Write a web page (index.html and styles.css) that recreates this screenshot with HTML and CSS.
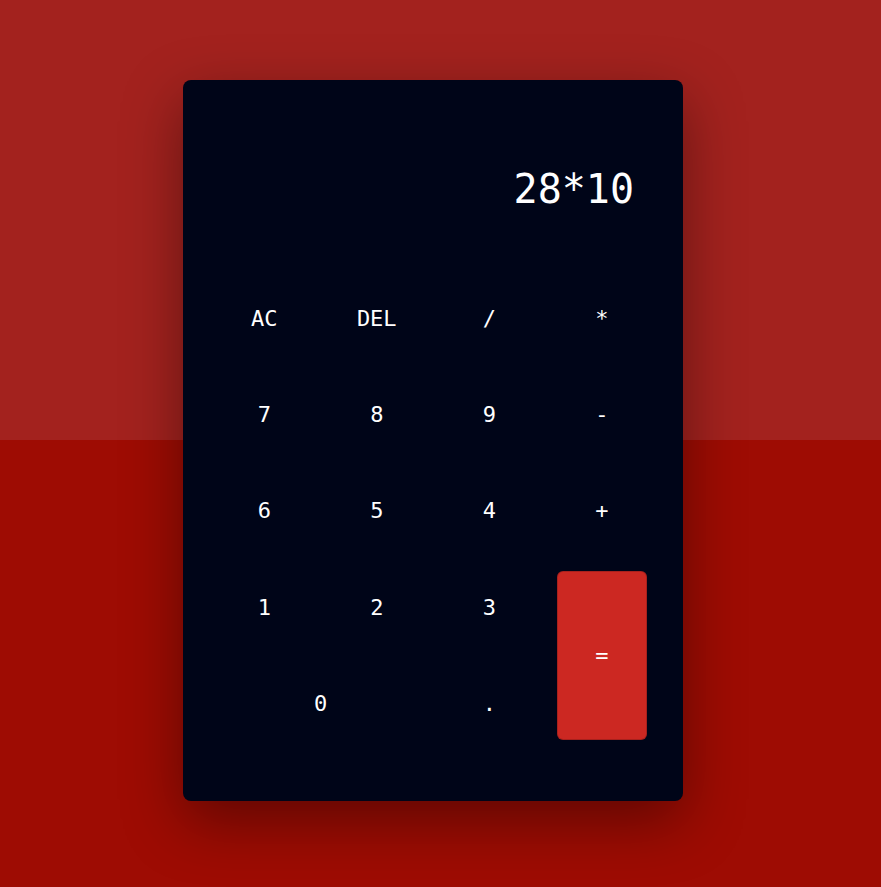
FILE: index.html
```html
<!DOCTYPE html>
<html lang="en">
<head>
<meta charset="utf-8">
<title>Calculator</title>
<link rel="stylesheet" href="styles.css">
</head>
<body>
<main class="page">
  <div class="calculator">
    <div class="display">28*10</div>
    <div class="keys">
      <button class="key">AC</button>
      <button class="key">DEL</button>
      <button class="key">/</button>
      <button class="key">*</button>
      <button class="key">7</button>
      <button class="key">8</button>
      <button class="key">9</button>
      <button class="key">-</button>
      <button class="key">6</button>
      <button class="key">5</button>
      <button class="key">4</button>
      <button class="key">+</button>
      <button class="key">1</button>
      <button class="key">2</button>
      <button class="key">3</button>
      <button class="key key-equals">=</button>
      <button class="key key-zero">0</button>
      <button class="key">.</button>
    </div>
  </div>
</main>
</body>
</html>
```
FILE: styles.css
```css
* { box-sizing: border-box; }
html, body { margin: 0; padding: 0; }
body {
  min-height: 887px;
  background: linear-gradient(to bottom, #a3221e 0, #a3221e 440px, #9e0c03 440px, #9e0c03 100%);
  font-family: "DejaVu Sans Mono", "Liberation Mono", monospace;
  color: #fff;
}
.page {
  display: flex;
  justify-content: center;
  padding-top: 80px;
  padding-right: 15px;
}
.calculator {
  width: 500px;
  height: 721px;
  background: #000518;
  border-radius: 8px;
  box-shadow: 0 20px 60px rgba(0, 0, 0, 0.4);
  padding: 0 25px 49px;
  display: flex;
  flex-direction: column;
}
.display {
  height: 190px;
  display: flex;
  align-items: center;
  justify-content: flex-end;
  padding-right: 24px;
  padding-top: 28px;
  font-size: 40px;
  line-height: 1;
}
.keys {
  display: grid;
  grid-template-columns: repeat(4, 1fr);
  grid-template-rows: repeat(5, 96.4px);
}
.key {
  margin: 13px 12px;
  border: none;
  border-radius: 5px;
  background: transparent;
  color: #fff;
  font-family: inherit;
  font-size: 22px;
  padding: 0;
  display: flex;
  align-items: center;
  justify-content: center;
}
.key-equals {
  grid-column: 4;
  grid-row: 4 / span 2;
  background: #cc2822;
  box-shadow: 0 0 0 1px #a8211d;
}
.key-zero {
  grid-column: 1 / span 2;
  grid-row: 5;
}
```
